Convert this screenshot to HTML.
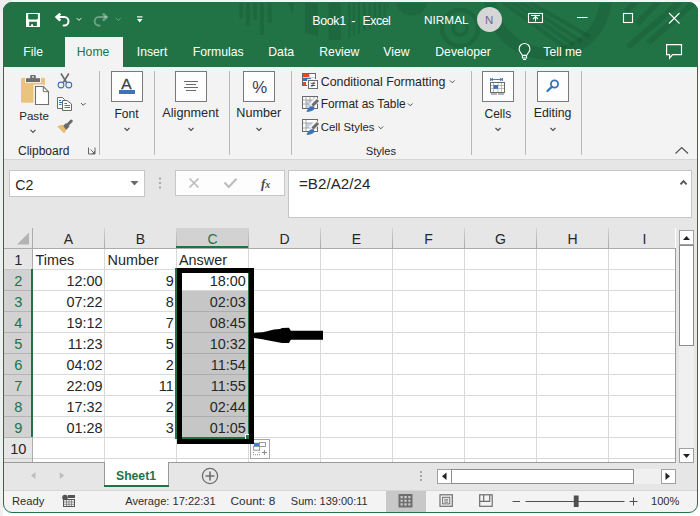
<!DOCTYPE html>
<html><head><meta charset="utf-8">
<style>
*{margin:0;padding:0;box-sizing:border-box}
html,body{width:700px;height:516px;overflow:hidden;background:#ffffff;font-family:"Liberation Sans",sans-serif}
.a{position:absolute}
.t{position:absolute;white-space:pre;line-height:1}
svg{position:absolute;overflow:visible}
#clip{position:absolute;left:0;top:0;width:700px;height:516px;clip-path:inset(2px 2px 3px 3px round 9px)}
</style></head><body>
<div class="a" style="left:0;top:0;width:3px;height:516px;background:#f0f0f0"></div>
<div class="a" style="left:0;top:0;width:700px;height:2px;background:#f4f4f4"></div>
<div class="a" style="left:0;top:0;width:12px;height:12px;background:#ededed"></div>
<div id="clip">
<div class="a" style="left:0px;top:0px;width:700px;height:67px;background:#217346"></div>
<svg style="left:0;top:0" width="700" height="67" viewBox="0 0 700 67">
<g fill="#000" fill-opacity="0.09">
<rect x="239.3" y="0" width="3.6" height="18.4"/>
<rect x="246" y="0" width="4" height="26"/>
<rect x="253.1" y="0" width="3.8" height="20"/>
<rect x="260" y="0" width="4" height="35"/>
<rect x="267.9" y="0" width="3.8" height="23.1"/>
<rect x="348.3" y="0" width="2.1" height="38.4"/>
<rect x="352.9" y="0" width="1.8" height="35.6"/>
<rect x="357.9" y="0" width="2.1" height="34"/>
<rect x="363" y="0" width="2.4" height="31"/>
<rect x="368.6" y="0" width="2.1" height="29"/>
<rect x="373.6" y="0" width="2.4" height="25.6"/>
<rect x="378.6" y="0" width="2.4" height="20.6"/>
<rect x="383.6" y="0" width="2.1" height="15.6"/>
<rect x="387" y="0" width="1.3" height="9"/>
<path d="M287 0 L294 0 L293 16.3 Z"/>
<path d="M305 0 H318 V36 L305 32.7 Z"/>
<rect x="328.6" y="0" width="12.1" height="40"/>
<path d="M395.6 0 A16 15.6 0 0 0 427.6 0 Z"/>
</g>
<g fill="none" stroke="#000" stroke-opacity="0.09">
<circle cx="460" cy="28" r="7" stroke-width="4"/>
<circle cx="460" cy="28" r="18" stroke-width="4.5"/>
<circle cx="548" cy="-4" r="58" stroke-width="12"/>
<path d="M503 2 L566 48 M511.5 2 L574 45 M520 2 L582 42 M529 2 L590 37" stroke-width="4.3"/>
<path d="M638 0 L626 11 M660 0 L637 24 M682 0 L628 47 M697 0 L648 43" stroke-width="6"/>
</g>
</svg>
<div class="t" style="left:312.3px;top:14.71px;font-size:12.4px;color:#fff;font-weight:400;letter-spacing:-0.35px">Book1</div>
<div class="t" style="left:351.3px;top:14.54px;font-size:12.6px;color:#fff;font-weight:400;">-</div>
<div class="t" style="left:362.5px;top:14.71px;font-size:12.4px;color:#fff;font-weight:400;letter-spacing:-0.5px">Excel</div>
<div class="t" style="left:424px;top:15.21px;font-size:11.8px;color:#fff;font-weight:400;">NIRMAL</div>
<div class="a" style="left:477px;top:7px;width:25px;height:25px;border-radius:50%;background:#d6d6d6"></div>
<div class="t" style="left:389.2px;width:200px;top:14.65px;font-size:11.5px;color:#756786;font-weight:400;text-align:center;">N</div>
<svg style="left:0;top:0" width="700" height="40" viewBox="0 0 700 40">
<path fill="#fff" fill-rule="evenodd" d="M26 13 H40 V27 H26 Z M28.2 14.1 V18.6 L29.1 19.5 H37 L37.9 18.6 V14.1 Z M29.2 21.8 V26 H31.1 V24.3 H33 V26 H36.9 V21.8 Z"/>
<g fill="none" stroke="#fff">
<path d="M57 17.1 H64.3 A4.2 4.2 0 0 1 64.3 25.5 H63.6" stroke-width="2" stroke-linecap="round"/>
<path d="M60.3 13.6 L56.6 17.1 L60.3 20.6" stroke-width="2.6"/>
</g>
<path d="M76.8 18.2 L79 20.4 L81.2 18.2" stroke="#fff" stroke-width="1" fill="none"/>
<g fill="none" stroke="#fff" stroke-opacity="0.33">
<path d="M106.2 17.1 H98.9 A4.2 4.2 0 0 0 98.9 25.5 H99.6" stroke-width="2" stroke-linecap="round"/>
<path d="M102.9 13.6 L106.6 17.1 L102.9 20.6" stroke-width="2.6"/>
</g>
<path d="M116.2 18.2 L118.4 20.4 L120.6 18.2" stroke="#fff" stroke-opacity="0.35" stroke-width="1" fill="none"/>
<rect x="137" y="16.3" width="5.5" height="1.2" fill="#fff"/>
<path d="M137 19 H142.5 L139.75 22.6 Z" fill="#fff"/>
<g fill="none" stroke="#fff" stroke-width="1.1">
<rect x="528.5" y="13.5" width="14" height="9"/>
<path d="M535.5 21.5 V16.5 M533 19 L535.5 16.5 L538 19 M531 15.5 H540"/>
<path d="M577 17.5 H587.5"/>
<rect x="623.5" y="13.5" width="9" height="9"/>
<path d="M669 13 L679.5 23.5 M679.5 13 L669 23.5"/>
</g>
</svg>
<div class="a" style="left:65px;top:37px;width:58px;height:30px;background:#f3f3f3"></div>
<div class="t" style="left:23.3px;top:45.87px;font-size:12.2px;color:#fff;font-weight:400;">File</div>
<div class="t" style="left:76.8px;top:45.87px;font-size:12.2px;color:#217346;font-weight:400;">Home</div>
<div class="t" style="left:136.8px;top:45.87px;font-size:12.2px;color:#fff;font-weight:400;">Insert</div>
<div class="t" style="left:192.8px;top:45.87px;font-size:12.2px;color:#fff;font-weight:400;">Formulas</div>
<div class="t" style="left:268.3px;top:45.87px;font-size:12.2px;color:#fff;font-weight:400;">Data</div>
<div class="t" style="left:319.3px;top:45.87px;font-size:12.2px;color:#fff;font-weight:400;">Review</div>
<div class="t" style="left:383.3px;top:45.87px;font-size:12.2px;color:#fff;font-weight:400;">View</div>
<div class="t" style="left:435.3px;top:45.87px;font-size:12.2px;color:#fff;font-weight:400;">Developer</div>
<div class="t" style="left:543.3px;top:45.87px;font-size:12.2px;color:#fff;font-weight:400;">Tell me</div>
<svg style="left:0;top:36" width="700" height="30" viewBox="0 36 700 30">
<g fill="none" stroke="#fff" stroke-width="1.1">
<path d="M522.4 55.3 L520.5 52.5 A5.4 5.4 0 1 1 528.5 52.5 L526.6 55.3 Z" stroke-width="1.1"/>
<rect x="522.4" y="55.6" width="4.2" height="2.4" stroke-width="1"/>
<path d="M523 59.5 H526" stroke-width="1"/>
<path d="M666.6 44.6 H681.5 V54.6 H672.6 L669.6 58.2 V54.6 H666.6 Z" stroke-width="1.2"/>
</g>
</svg>
<div class="a" style="left:0px;top:67px;width:700px;height:92px;background:#f3f3f3"></div>
<div class="a" style="left:0px;top:159px;width:700px;height:1px;background:#d6d6d6"></div>
<div class="a" style="left:0px;top:160px;width:700px;height:68px;background:#e6e6e6"></div>
<div class="a" style="left:99px;top:71px;width:1px;height:84px;background:#b9b9b9"></div>
<div class="a" style="left:154px;top:71px;width:1px;height:84px;background:#b9b9b9"></div>
<div class="a" style="left:229px;top:71px;width:1px;height:84px;background:#b9b9b9"></div>
<div class="a" style="left:291px;top:71px;width:1px;height:84px;background:#b9b9b9"></div>
<div class="a" style="left:471px;top:71px;width:1px;height:84px;background:#b9b9b9"></div>
<div class="a" style="left:525px;top:71px;width:1px;height:84px;background:#b9b9b9"></div>
<div class="a" style="left:581px;top:71px;width:1px;height:84px;background:#b9b9b9"></div>
<div class="a" style="left:111px;top:71px;width:32px;height:31px;background:#fdfdfd;border:1px solid #7a7a7a"></div>
<div class="a" style="left:175px;top:71px;width:32px;height:31px;background:#fdfdfd;border:1px solid #7a7a7a"></div>
<div class="a" style="left:243px;top:71px;width:32px;height:31px;background:#fdfdfd;border:1px solid #7a7a7a"></div>
<div class="a" style="left:482px;top:71px;width:32px;height:31px;background:#fdfdfd;border:1px solid #7a7a7a"></div>
<div class="a" style="left:537px;top:71px;width:32px;height:31px;background:#fdfdfd;border:1px solid #7a7a7a"></div>
<div class="t" style="left:19.2px;top:109.97px;font-size:11.6px;color:#262626;font-weight:400;">Paste</div>
<div class="t" style="left:18px;top:145.24px;font-size:12px;color:#262626;font-weight:400;">Clipboard</div>
<div class="t" style="left:114.5px;top:107.64px;font-size:12px;color:#262626;font-weight:400;">Font</div>
<div class="t" style="left:162.3px;top:107.06px;font-size:12.7px;color:#262626;font-weight:400;">Alignment</div>
<div class="t" style="left:236.3px;top:107.14px;font-size:12.6px;color:#262626;font-weight:400;">Number</div>
<div class="t" style="left:484.5px;top:107.64px;font-size:12px;color:#262626;font-weight:400;">Cells</div>
<div class="t" style="left:533.8px;top:107.39px;font-size:12.3px;color:#262626;font-weight:400;">Editing</div>
<div class="t" style="left:320.7px;top:75.91px;font-size:12.4px;color:#262626;font-weight:400;">Conditional Formatting</div>
<div class="t" style="left:320.7px;top:99.32px;font-size:11.9px;color:#262626;font-weight:400;">Format as Table</div>
<div class="t" style="left:320.7px;top:122.44px;font-size:11.4px;color:#262626;font-weight:400;">Cell Styles</div>
<div class="t" style="left:365.7px;top:146.00px;font-size:11.2px;color:#262626;font-weight:400;">Styles</div>
<div class="t" style="left:121.3px;top:76.14px;font-size:15.5px;color:#404040;font-weight:400;-webkit-text-stroke:0.3px #404040">A</div>
<div class="t" style="left:252.3px;top:80.06px;font-size:16.8px;color:#404040;font-weight:400;">%</div>
<svg style="left:0;top:0" width="700" height="160" viewBox="0 0 700 160">
<g fill="none" stroke="#505050" stroke-width="1">
<path d="M30.5 129.8 L33 132.3 L35.5 129.8" stroke-width="1.2"/>
<path d="M124.5 128 L127 130.5 L129.5 128" stroke-width="1.2"/>
<path d="M188.5 128 L191 130.5 L193.5 128" stroke-width="1.2"/>
<path d="M256.5 128 L259 130.5 L261.5 128" stroke-width="1.2"/>
<path d="M495.5 128 L498 130.5 L500.5 128" stroke-width="1.2"/>
<path d="M550.5 128 L553 130.5 L555.5 128" stroke-width="1.2"/>
<path d="M81 103 L83.3 105.3 L85.6 103"/>
<path d="M450 80.5 L452.3 82.8 L454.6 80.5"/>
<path d="M408 103.5 L410.3 105.8 L412.6 103.5"/>
<path d="M378.5 126.5 L380.8 128.8 L383.1 126.5"/>
<path d="M675.5 153.5 L681.7 147.5 L688 153.5" stroke-width="1.1"/>
<path d="M88.5 147.5 V154 H95 V147.5 M90.5 149.5 L94.5 153.5 M94.5 151 V153.5 H92" stroke="#666"/>
</g>
<rect x="119" y="90" width="16" height="4" fill="#4073b4"/>
<g stroke="#6a6a6a" stroke-width="1">
<path d="M184 81.5 H198 M186 84.5 H196 M184 87.5 H198 M186 90.5 H196"/>
</g>
<!-- paste -->
<rect x="21" y="77.8" width="24" height="25" rx="1.5" fill="#ebc47c"/>
<rect x="25" y="76.8" width="16" height="6" fill="#f3f3f3"/>
<rect x="26" y="78.2" width="14" height="3.8" fill="#6e6e6e"/>
<rect x="30.2" y="75" width="5.6" height="4" rx="1" fill="#6e6e6e"/>
<rect x="32.2" y="76.2" width="1.6" height="1.6" fill="#f3f3f3"/>
<path d="M33.5 84.5 H44 L50.2 90.7 V106 H33.5 Z" fill="#f3f3f3"/>
<path d="M35.5 86.5 H43.3 L48.5 91.7 V104.5 H35.5 Z" fill="#fff" stroke="#6e6e6e" stroke-width="1.1"/>
<path d="M43.3 86.5 V91.7 H48.5" fill="none" stroke="#6e6e6e" stroke-width="1"/>
<!-- scissors -->
<g stroke="#6a6a6a" stroke-width="1.6" fill="none">
<path d="M61 73.5 L66.5 82.5 M68.8 73.5 L63.3 82.5"/>
</g>
<g stroke="#3b73b9" stroke-width="1.1" fill="none">
<circle cx="61" cy="85" r="2.9"/>
<circle cx="68.8" cy="85" r="2.9"/>
</g>
<!-- copy -->
<path d="M57.5 97.5 H62.5 L64.5 99.5 V108.5 H57.5 Z" fill="#fff" stroke="#6a6a6a" stroke-width="1"/>
<path d="M62.5 100.5 H67 L71.5 104 V110.5 H62.5 Z" fill="#fff" stroke="#6a6a6a" stroke-width="1"/>
<g stroke="#3b73b9" stroke-width="1">
<path d="M59 100.5 H61 M59 102.5 H62 M59 104.5 H61.5"/>
<path d="M64.5 103.5 H67 M64.5 105.5 H70 M64.5 107.5 H70"/>
</g>
<!-- format painter -->
<path d="M71.3 121 L68.2 124.2" stroke="#6a6a6a" stroke-width="3" stroke-linecap="round"/>
<path d="M67.8 124.8 L63.5 129" stroke="#6a6a6a" stroke-width="5"/>
<path d="M57.2 126.4 L62.2 124.6 L66.2 130 L64.1 133.6 Z" fill="#e9bd6e"/>
<!-- cond formatting -->
<rect x="302.5" y="73.5" width="13" height="12" fill="#fff" stroke="#6a6a6a" stroke-width="1"/>
<rect x="303" y="74" width="6" height="3" fill="#e04b25"/>
<rect x="303" y="78" width="8" height="3" fill="#3b73b9"/>
<rect x="303" y="82" width="3" height="3" fill="#e04b25"/>
<path d="M303 77.5 H315 M309.5 74 V77.5" stroke="#c8c8c8" stroke-width="0.8"/>
<rect x="307.2" y="79" width="11.5" height="10.5" fill="#f3f3f3"/>
<rect x="308.5" y="80.5" width="9" height="8" fill="#fff" stroke="#6a6a6a" stroke-width="1"/>
<path d="M310.8 83.3 H315.2 M310.8 85.5 H315.2 M314.3 81.8 L311.7 87" stroke="#404040" stroke-width="0.9"/>
<!-- format as table / cell styles -->
<g>
<rect x="302.5" y="96.5" width="15" height="12" fill="#fff" stroke="#6a6a6a" stroke-width="1"/>
<rect x="306" y="100" width="8" height="8" fill="#c4d6ea"/>
<path d="M303 100 H317 M303 104 H317 M306 97 V108 M310 97 V108 M314 97 V108" stroke="#a0a0a0" stroke-width="0.9"/>
<path d="M318 99 L311 106" stroke="#f3f3f3" stroke-width="6"/>
<path d="M318 100 L312.5 105.5" stroke="#6a6a6a" stroke-width="3"/>
<path d="M306.5 112 C307.5 109 309.5 106.5 312 106 C314 106 315 108 314 109.5 C312.5 111 309.5 112 306.5 112 Z" fill="#3b73b9"/>
<rect x="302.5" y="119.5" width="15" height="12" fill="#fff" stroke="#6a6a6a" stroke-width="1"/>
<rect x="306" y="123" width="11" height="5" fill="#c4d6ea"/>
<path d="M303 123 H317 M303 128 H317 M306 120 V131" stroke="#a0a0a0" stroke-width="0.9"/>
<path d="M318 122 L311 129" stroke="#f3f3f3" stroke-width="6"/>
<path d="M318 123 L312.5 128.5" stroke="#6a6a6a" stroke-width="3"/>
<path d="M306.5 135 C307.5 132 309.5 129.5 312 129 C314 129 315 131 314 132.5 C312.5 134 309.5 135 306.5 135 Z" fill="#3b73b9"/>
</g>
<!-- cells -->
<path d="M490.5 78 V81 M502.5 78 V81 M491 79.5 H502 M491 79.5 L493 78 M491 79.5 L493 81 M502 79.5 L500 78 M502 79.5 L500 81" stroke="#3b73b9" stroke-width="0.9" fill="none"/>
<rect x="490.5" y="82.5" width="14" height="10" fill="#fff" stroke="#6a6a6a" stroke-width="1"/>
<path d="M491 85.5 H504 M491 88.5 H504 M493.5 83 V92 M498 83 V92 M501.5 83 V92" stroke="#b0b0b0" stroke-width="0.8"/>
<rect x="493.5" y="85" width="4.5" height="3.8" fill="#3b73b9"/>
<path d="M491 94 H497 M498 94 H504" stroke="#6a6a6a" stroke-width="1"/>
<!-- editing -->
<circle cx="554.5" cy="84" r="3.6" fill="none" stroke="#3b73b9" stroke-width="1.8"/>
<path d="M551.8 86.8 L547.5 91" stroke="#3b73b9" stroke-width="2.3" stroke-linecap="round"/>
</svg>
<div class="a" style="left:9px;top:170px;width:136px;height:27px;background:#fff;border:1px solid #c6c6c6"></div>
<div class="t" style="left:15.3px;top:177.61px;font-size:14.2px;color:#262626;font-weight:400;">C2</div>
<div class="a" style="left:175px;top:170px;width:110px;height:26px;background:#fdfdfd;border:1px solid #c6c6c6"></div>
<div class="a" style="left:288px;top:170px;width:404px;height:48px;background:#fff;border:1px solid #c6c6c6"></div>
<div class="t" style="left:299px;top:176.38px;font-size:15.2px;color:#262626;font-weight:400;">=B2/A2/24</div>
<svg style="left:0;top:0" width="700" height="230" viewBox="0 0 700 230">
<path d="M130.5 181 H138.5 L134.5 185.5 Z" fill="#6a6a6a"/>
<g fill="#a6a6a6"><rect x="159" y="177.5" width="2" height="2"/><rect x="159" y="182" width="2" height="2"/><rect x="159" y="186.5" width="2" height="2"/></g>
<path d="M189.5 178.5 L198.5 187.5 M198.5 178.5 L189.5 187.5" stroke="#bdbdbd" stroke-width="1.7" fill="none"/>
<path d="M224.5 182.5 L228.8 187 L236.5 178.8" stroke="#bdbdbd" stroke-width="2.2" fill="none"/>
<path d="M680.5 184.3 L683.5 181.2 L686.6 184.3" stroke="#555" stroke-width="1.9" fill="none"/>
</svg>
<div class="t" style="left:261px;top:176.5px;font-family:'Liberation Serif',serif;font-style:italic;font-weight:700;font-size:13px;color:#4a4a4a">f<span style="font-size:10px">x</span></div>
<div class="a" style="left:4px;top:228px;width:671px;height:20px;background:#e6e6e6"></div>
<div class="a" style="left:176px;top:228px;width:72px;height:20px;background:#d2d2d2"></div>
<div class="a" style="left:4px;top:248px;width:28px;height:214px;background:#e6e6e6"></div>
<div class="a" style="left:4px;top:269px;width:28px;height:168px;background:#d2d2d2"></div>
<div class="a" style="left:33px;top:249px;width:642px;height:213px;background:#fff"></div>
<div class="a" style="left:177px;top:291px;width:71px;height:146px;background:#c6c6c6"></div>
<div class="a" style="left:33px;top:269px;width:642px;height:1px;background:#d9d9d9"></div>
<div class="a" style="left:4px;top:269px;width:28px;height:1px;background:#c8c8c8"></div>
<div class="a" style="left:33px;top:290px;width:642px;height:1px;background:#d9d9d9"></div>
<div class="a" style="left:4px;top:290px;width:28px;height:1px;background:#c8c8c8"></div>
<div class="a" style="left:33px;top:311px;width:642px;height:1px;background:#d9d9d9"></div>
<div class="a" style="left:4px;top:311px;width:28px;height:1px;background:#c8c8c8"></div>
<div class="a" style="left:33px;top:332px;width:642px;height:1px;background:#d9d9d9"></div>
<div class="a" style="left:4px;top:332px;width:28px;height:1px;background:#c8c8c8"></div>
<div class="a" style="left:33px;top:353px;width:642px;height:1px;background:#d9d9d9"></div>
<div class="a" style="left:4px;top:353px;width:28px;height:1px;background:#c8c8c8"></div>
<div class="a" style="left:33px;top:374px;width:642px;height:1px;background:#d9d9d9"></div>
<div class="a" style="left:4px;top:374px;width:28px;height:1px;background:#c8c8c8"></div>
<div class="a" style="left:33px;top:395px;width:642px;height:1px;background:#d9d9d9"></div>
<div class="a" style="left:4px;top:395px;width:28px;height:1px;background:#c8c8c8"></div>
<div class="a" style="left:33px;top:416px;width:642px;height:1px;background:#d9d9d9"></div>
<div class="a" style="left:4px;top:416px;width:28px;height:1px;background:#c8c8c8"></div>
<div class="a" style="left:33px;top:437px;width:642px;height:1px;background:#d9d9d9"></div>
<div class="a" style="left:4px;top:437px;width:28px;height:1px;background:#c8c8c8"></div>
<div class="a" style="left:33px;top:458px;width:642px;height:1px;background:#d9d9d9"></div>
<div class="a" style="left:4px;top:458px;width:28px;height:1px;background:#c8c8c8"></div>
<div class="a" style="left:104px;top:249px;width:1px;height:213px;background:#d9d9d9"></div>
<div class="a" style="left:104px;top:228px;width:1px;height:20px;background:linear-gradient(#d4d4d4,#a8a8a8)"></div>
<div class="a" style="left:176px;top:249px;width:1px;height:213px;background:#d9d9d9"></div>
<div class="a" style="left:176px;top:228px;width:1px;height:20px;background:linear-gradient(#d4d4d4,#a8a8a8)"></div>
<div class="a" style="left:248px;top:249px;width:1px;height:213px;background:#d9d9d9"></div>
<div class="a" style="left:248px;top:228px;width:1px;height:20px;background:linear-gradient(#d4d4d4,#a8a8a8)"></div>
<div class="a" style="left:320px;top:249px;width:1px;height:213px;background:#d9d9d9"></div>
<div class="a" style="left:320px;top:228px;width:1px;height:20px;background:linear-gradient(#d4d4d4,#a8a8a8)"></div>
<div class="a" style="left:392px;top:249px;width:1px;height:213px;background:#d9d9d9"></div>
<div class="a" style="left:392px;top:228px;width:1px;height:20px;background:linear-gradient(#d4d4d4,#a8a8a8)"></div>
<div class="a" style="left:464px;top:249px;width:1px;height:213px;background:#d9d9d9"></div>
<div class="a" style="left:464px;top:228px;width:1px;height:20px;background:linear-gradient(#d4d4d4,#a8a8a8)"></div>
<div class="a" style="left:536px;top:249px;width:1px;height:213px;background:#d9d9d9"></div>
<div class="a" style="left:536px;top:228px;width:1px;height:20px;background:linear-gradient(#d4d4d4,#a8a8a8)"></div>
<div class="a" style="left:608px;top:249px;width:1px;height:213px;background:#d9d9d9"></div>
<div class="a" style="left:608px;top:228px;width:1px;height:20px;background:linear-gradient(#d4d4d4,#a8a8a8)"></div>
<div class="a" style="left:680px;top:249px;width:1px;height:213px;background:#d9d9d9"></div>
<div class="a" style="left:680px;top:228px;width:1px;height:20px;background:linear-gradient(#d4d4d4,#a8a8a8)"></div>
<div class="a" style="left:177px;top:311px;width:71px;height:1px;background:#acacac"></div>
<div class="a" style="left:177px;top:332px;width:71px;height:1px;background:#acacac"></div>
<div class="a" style="left:177px;top:353px;width:71px;height:1px;background:#acacac"></div>
<div class="a" style="left:177px;top:374px;width:71px;height:1px;background:#acacac"></div>
<div class="a" style="left:177px;top:395px;width:71px;height:1px;background:#acacac"></div>
<div class="a" style="left:177px;top:416px;width:71px;height:1px;background:#acacac"></div>
<div class="a" style="left:177px;top:437px;width:71px;height:1px;background:#acacac"></div>
<div class="a" style="left:4px;top:290px;width:27px;height:1px;background:#b4b4b4"></div>
<div class="a" style="left:4px;top:311px;width:27px;height:1px;background:#b4b4b4"></div>
<div class="a" style="left:4px;top:332px;width:27px;height:1px;background:#b4b4b4"></div>
<div class="a" style="left:4px;top:353px;width:27px;height:1px;background:#b4b4b4"></div>
<div class="a" style="left:4px;top:374px;width:27px;height:1px;background:#b4b4b4"></div>
<div class="a" style="left:4px;top:395px;width:27px;height:1px;background:#b4b4b4"></div>
<div class="a" style="left:4px;top:416px;width:27px;height:1px;background:#b4b4b4"></div>
<div class="a" style="left:4px;top:437px;width:27px;height:1px;background:#b4b4b4"></div>
<div class="a" style="left:4px;top:248px;width:671px;height:1px;background:#ababab"></div>
<div class="a" style="left:32px;top:228px;width:1px;height:234px;background:#ababab"></div>
<div class="a" style="left:176px;top:246px;width:72px;height:2px;background:#217346"></div>
<div class="a" style="left:31px;top:269px;width:2px;height:168px;background:#217346"></div>
<div class="a" style="left:675px;top:248px;width:1px;height:215px;background:#9a9a9a"></div>
<div class="a" style="left:4px;top:462px;width:672px;height:1px;background:#9a9a9a"></div>
<svg style="left:0;top:0" width="40" height="250" viewBox="0 0 40 250"><path d="M29 232.5 V244.5 H17 Z" fill="#b4b4b4"/></svg>
<div class="t" style="left:-31.5px;width:200px;top:232.38px;font-size:14px;color:#262626;font-weight:400;text-align:center;">A</div>
<div class="t" style="left:40.5px;width:200px;top:232.38px;font-size:14px;color:#262626;font-weight:400;text-align:center;">B</div>
<div class="t" style="left:112.5px;width:200px;top:232.38px;font-size:14px;color:#217346;font-weight:400;text-align:center;">C</div>
<div class="t" style="left:184.5px;width:200px;top:232.38px;font-size:14px;color:#262626;font-weight:400;text-align:center;">D</div>
<div class="t" style="left:256.5px;width:200px;top:232.38px;font-size:14px;color:#262626;font-weight:400;text-align:center;">E</div>
<div class="t" style="left:328.5px;width:200px;top:232.38px;font-size:14px;color:#262626;font-weight:400;text-align:center;">F</div>
<div class="t" style="left:400.5px;width:200px;top:232.38px;font-size:14px;color:#262626;font-weight:400;text-align:center;">G</div>
<div class="t" style="left:472.5px;width:200px;top:232.38px;font-size:14px;color:#262626;font-weight:400;text-align:center;">H</div>
<div class="t" style="left:544.5px;width:200px;top:232.38px;font-size:14px;color:#262626;font-weight:400;text-align:center;">I</div>
<div class="t" style="left:-81.7px;width:200px;top:253.18px;font-size:14.6px;color:#262626;font-weight:400;text-align:center;">1</div>
<div class="t" style="left:-81.7px;width:200px;top:274.18px;font-size:14.6px;color:#217346;font-weight:400;text-align:center;">2</div>
<div class="t" style="left:-81.7px;width:200px;top:295.18px;font-size:14.6px;color:#217346;font-weight:400;text-align:center;">3</div>
<div class="t" style="left:-81.7px;width:200px;top:316.18px;font-size:14.6px;color:#217346;font-weight:400;text-align:center;">4</div>
<div class="t" style="left:-81.7px;width:200px;top:337.18px;font-size:14.6px;color:#217346;font-weight:400;text-align:center;">5</div>
<div class="t" style="left:-81.7px;width:200px;top:358.18px;font-size:14.6px;color:#217346;font-weight:400;text-align:center;">6</div>
<div class="t" style="left:-81.7px;width:200px;top:379.18px;font-size:14.6px;color:#217346;font-weight:400;text-align:center;">7</div>
<div class="t" style="left:-81.7px;width:200px;top:400.18px;font-size:14.6px;color:#217346;font-weight:400;text-align:center;">8</div>
<div class="t" style="left:-81.7px;width:200px;top:421.18px;font-size:14.6px;color:#217346;font-weight:400;text-align:center;">9</div>
<div class="t" style="left:-81.7px;width:200px;top:442.18px;font-size:14.6px;color:#262626;font-weight:400;text-align:center;">10</div>
<div class="t" style="left:35.5px;top:253.05px;font-size:14.4px;color:#262626;font-weight:400;">Times</div>
<div class="t" style="left:107.5px;top:253.05px;font-size:14.4px;color:#262626;font-weight:400;">Number</div>
<div class="t" style="left:179px;top:253.05px;font-size:14.4px;color:#262626;font-weight:400;">Answer</div>
<div class="t" style="right:597.4px;top:274.05px;font-size:14.4px;color:#262626;font-weight:400;text-align:right;">12:00</div>
<div class="t" style="right:526.2px;top:274.05px;font-size:14.4px;color:#262626;font-weight:400;text-align:right;">9</div>
<div class="t" style="right:454.2px;top:274.05px;font-size:14.4px;color:#262626;font-weight:400;text-align:right;">18:00</div>
<div class="t" style="right:597.4px;top:295.05px;font-size:14.4px;color:#262626;font-weight:400;text-align:right;">07:22</div>
<div class="t" style="right:526.2px;top:295.05px;font-size:14.4px;color:#262626;font-weight:400;text-align:right;">8</div>
<div class="t" style="right:454.2px;top:295.05px;font-size:14.4px;color:#262626;font-weight:400;text-align:right;">02:03</div>
<div class="t" style="right:597.4px;top:316.05px;font-size:14.4px;color:#262626;font-weight:400;text-align:right;">19:12</div>
<div class="t" style="right:526.2px;top:316.05px;font-size:14.4px;color:#262626;font-weight:400;text-align:right;">7</div>
<div class="t" style="right:454.2px;top:316.05px;font-size:14.4px;color:#262626;font-weight:400;text-align:right;">08:45</div>
<div class="t" style="right:597.4px;top:337.05px;font-size:14.4px;color:#262626;font-weight:400;text-align:right;">11:23</div>
<div class="t" style="right:526.2px;top:337.05px;font-size:14.4px;color:#262626;font-weight:400;text-align:right;">5</div>
<div class="t" style="right:454.2px;top:337.05px;font-size:14.4px;color:#262626;font-weight:400;text-align:right;">10:32</div>
<div class="t" style="right:597.4px;top:358.05px;font-size:14.4px;color:#262626;font-weight:400;text-align:right;">04:02</div>
<div class="t" style="right:526.2px;top:358.05px;font-size:14.4px;color:#262626;font-weight:400;text-align:right;">2</div>
<div class="t" style="right:454.2px;top:358.05px;font-size:14.4px;color:#262626;font-weight:400;text-align:right;">11:54</div>
<div class="t" style="right:597.4px;top:379.05px;font-size:14.4px;color:#262626;font-weight:400;text-align:right;">22:09</div>
<div class="t" style="right:526.2px;top:379.05px;font-size:14.4px;color:#262626;font-weight:400;text-align:right;">11</div>
<div class="t" style="right:454.2px;top:379.05px;font-size:14.4px;color:#262626;font-weight:400;text-align:right;">11:55</div>
<div class="t" style="right:597.4px;top:400.05px;font-size:14.4px;color:#262626;font-weight:400;text-align:right;">17:32</div>
<div class="t" style="right:526.2px;top:400.05px;font-size:14.4px;color:#262626;font-weight:400;text-align:right;">2</div>
<div class="t" style="right:454.2px;top:400.05px;font-size:14.4px;color:#262626;font-weight:400;text-align:right;">02:44</div>
<div class="t" style="right:597.4px;top:421.05px;font-size:14.4px;color:#262626;font-weight:400;text-align:right;">01:28</div>
<div class="t" style="right:526.2px;top:421.05px;font-size:14.4px;color:#262626;font-weight:400;text-align:right;">3</div>
<div class="t" style="right:454.2px;top:421.05px;font-size:14.4px;color:#262626;font-weight:400;text-align:right;">01:05</div>
<div class="a" style="left:175px;top:268px;width:2px;height:171px;background:#217346"></div>
<div class="a" style="left:248px;top:268px;width:2px;height:171px;background:#217346"></div>
<div class="a" style="left:175px;top:437px;width:75px;height:2px;background:#217346"></div>
<div class="a" style="left:245px;top:434px;width:5px;height:5px;background:#fff"></div>
<div class="a" style="left:246px;top:435px;width:4px;height:4px;background:#217346"></div>
<svg style="left:0;top:0" width="700" height="516" viewBox="0 0 700 516">
<rect x="250.5" y="439.5" width="19" height="19" fill="#fff" stroke="#a8a8a8" stroke-width="1"/>
<rect x="253.8" y="442.8" width="5.5" height="3.4" fill="#3d7cf5"/>
<rect x="259.5" y="442.6" width="6" height="3.8" fill="#fff" stroke="#8a8a8a" stroke-width="0.9"/>
<rect x="253.6" y="446.4" width="6" height="3.8" fill="#fff" stroke="#8a8a8a" stroke-width="0.9"/>
<g fill="#8a8a8a"><rect x="253" y="452" width="1" height="1"/><rect x="258.5" y="452" width="1" height="1"/>
<rect x="253" y="454.2" width="1" height="1"/><rect x="255" y="454.2" width="1" height="1"/><rect x="257" y="454.2" width="1" height="1"/><rect x="259" y="454.2" width="1" height="1"/></g>
<path d="M261.8 452.5 H267 M264.4 450 V455" stroke="#8a8a8a" stroke-width="1"/>
</svg>
<div class="a" style="left:177px;top:268px;width:77px;height:176px;border:5px solid #000"></div>
<svg style="left:0;top:0" width="700" height="516" viewBox="0 0 700 516"><path d="M253.5 332.9 L262.5 332.2 L266 331.5 L274 329.4 L280 329 L282 327.9 L289 327.8 L290.8 330.7 L323 330.7 L323 339.7 L290.8 339.7 L289 343 L282 343 L274 341.5 L266 340 L262.5 339.3 L253.5 338Z" fill="#000"/></svg>
<div class="a" style="left:676px;top:228px;width:21px;height:235px;background:#e6e6e6"></div>
<div class="a" style="left:679px;top:230px;width:15px;height:232px;background:#f0f0f0"></div>
<div class="a" style="left:679px;top:230px;width:15px;height:15px;background:#fff;border:1px solid #a0a0a0"></div>
<div class="a" style="left:679px;top:245px;width:15px;height:101px;background:#fff;border:1px solid #8c8c8c"></div>
<div class="a" style="left:679px;top:448px;width:15px;height:15px;background:#fff;border:1px solid #a0a0a0"></div>
<svg style="left:0;top:0" width="700" height="516" viewBox="0 0 700 516">
<path d="M683 240 L690 240 L686.5 236 Z" fill="#222"/>
<path d="M683 454 L690 454 L686.5 458 Z" fill="#222"/>
</svg>
<div class="a" style="left:4px;top:463px;width:693px;height:27px;background:#e6e6e6"></div>
<div class="a" style="left:104px;top:462px;width:65px;height:25px;background:#fff;border-left:1px solid #9a9a9a;border-right:1px solid #9a9a9a"></div>
<div class="a" style="left:104px;top:485px;width:65px;height:2px;background:#217346"></div>
<div class="t" style="left:116px;top:469.57px;font-size:12.2px;color:#217346;font-weight:700;">Sheet1</div>
<svg style="left:0;top:0" width="700" height="516" viewBox="0 0 700 516">
<path d="M35.5 472.3 V479 L31 475.6 Z" fill="#bdbdbd"/>
<path d="M59.8 472.3 V479 L64.3 475.6 Z" fill="#bdbdbd"/>
<circle cx="210" cy="476" r="7.6" fill="none" stroke="#6e6e6e" stroke-width="1.3"/>
<path d="M205.5 476 H214.5 M210 471.5 V480.5" stroke="#6e6e6e" stroke-width="1.6"/>
<g fill="#a6a6a6"><rect x="420" y="471" width="2" height="2"/><rect x="420" y="475" width="2" height="2"/><rect x="420" y="479" width="2" height="2"/></g>
</svg>
<div class="a" style="left:437px;top:469px;width:238px;height:15px;background:#f0f0f0"></div>
<div class="a" style="left:437px;top:469px;width:15px;height:15px;background:#fff;border:1px solid #a0a0a0"></div>
<div class="a" style="left:451px;top:469px;width:183px;height:15px;background:#fff;border:1px solid #8c8c8c"></div>
<div class="a" style="left:661px;top:469px;width:15px;height:15px;background:#fff;border:1px solid #a0a0a0"></div>
<svg style="left:0;top:0" width="700" height="516" viewBox="0 0 700 516">
<path d="M446.5 472.5 V480 L442 476.3 Z" fill="#222"/>
<path d="M665.5 472.5 V480 L670 476.3 Z" fill="#222"/>
</svg>
<div class="a" style="left:0px;top:490px;width:700px;height:26px;background:#f3f3f3"></div>
<div class="a" style="left:0px;top:490px;width:700px;height:1px;background:#d6d6d6"></div>
<div class="a" style="left:386px;top:491px;width:40px;height:22px;background:#c8c8c8"></div>
<div class="t" style="left:12px;top:495.70px;font-size:11.2px;color:#2e2e2e;font-weight:400;">Ready</div>
<div class="t" style="left:125.2px;top:496.39px;font-size:11.1px;color:#2e2e2e;font-weight:400;">Average: 17:22:31</div>
<div class="t" style="left:230.6px;top:495.81px;font-size:11.8px;color:#2e2e2e;font-weight:400;">Count: 8</div>
<div class="t" style="left:290.8px;top:496.47px;font-size:11.0px;color:#2e2e2e;font-weight:400;">Sum: 139:00:11</div>
<div class="t" style="left:651px;top:496.39px;font-size:11.1px;color:#2e2e2e;font-weight:400;">100%</div>
<svg style="left:0;top:0" width="700" height="516" viewBox="0 0 700 516">
<circle cx="65" cy="497.5" r="2.8" fill="#555"/>
<rect x="68" y="495" width="7" height="3" fill="#555"/>
<rect x="63.5" y="499.5" width="11" height="7" fill="none" stroke="#555" stroke-width="1"/>
<path d="M64 502 H74 M64 504.3 H74 M66.5 500 V506 M69 500 V506 M71.5 500 V506" stroke="#777" stroke-width="0.8"/>
<rect x="399.5" y="495" width="12" height="11.5" fill="none" stroke="#6e6e6e" stroke-width="2"/>
<path d="M399 499 H412 M399 502.5 H412 M403.5 495 V506.5 M407.5 495 V506.5" stroke="#6e6e6e" stroke-width="1.5"/>
<rect x="440" y="494.8" width="12.3" height="11.5" fill="none" stroke="#6e6e6e" stroke-width="1.2"/>
<rect x="442.6" y="497.3" width="7.2" height="6.6" fill="none" stroke="#6e6e6e" stroke-width="1"/>
<path d="M444.2 499.3 H448.2 M444.2 500.8 H448.2 M444.2 502.3 H448.2" stroke="#6e6e6e" stroke-width="0.8"/>
<rect x="479.7" y="494.8" width="12.5" height="11.5" fill="none" stroke="#6e6e6e" stroke-width="1.2"/>
<path d="M479.7 501.3 H489.7 V494.8 M483.7 494.8 V501.3" fill="none" stroke="#6e6e6e" stroke-width="1.2"/>
<path d="M512.5 501.5 H520" stroke="#505050" stroke-width="1"/>
<path d="M525.5 501.5 H624.5" stroke="#505050" stroke-width="1.2"/>
<rect x="573.8" y="495.5" width="4.8" height="11.5" fill="#505050"/>
<path d="M629.5 501.5 H637.5 M633.5 497.5 V505.5" stroke="#505050" stroke-width="1"/>
</svg>
</div>
<div class="a" style="left:3px;top:2px;width:695px;height:511px;border:1px solid #217346;border-radius:9px;pointer-events:none"></div>
</body></html>
